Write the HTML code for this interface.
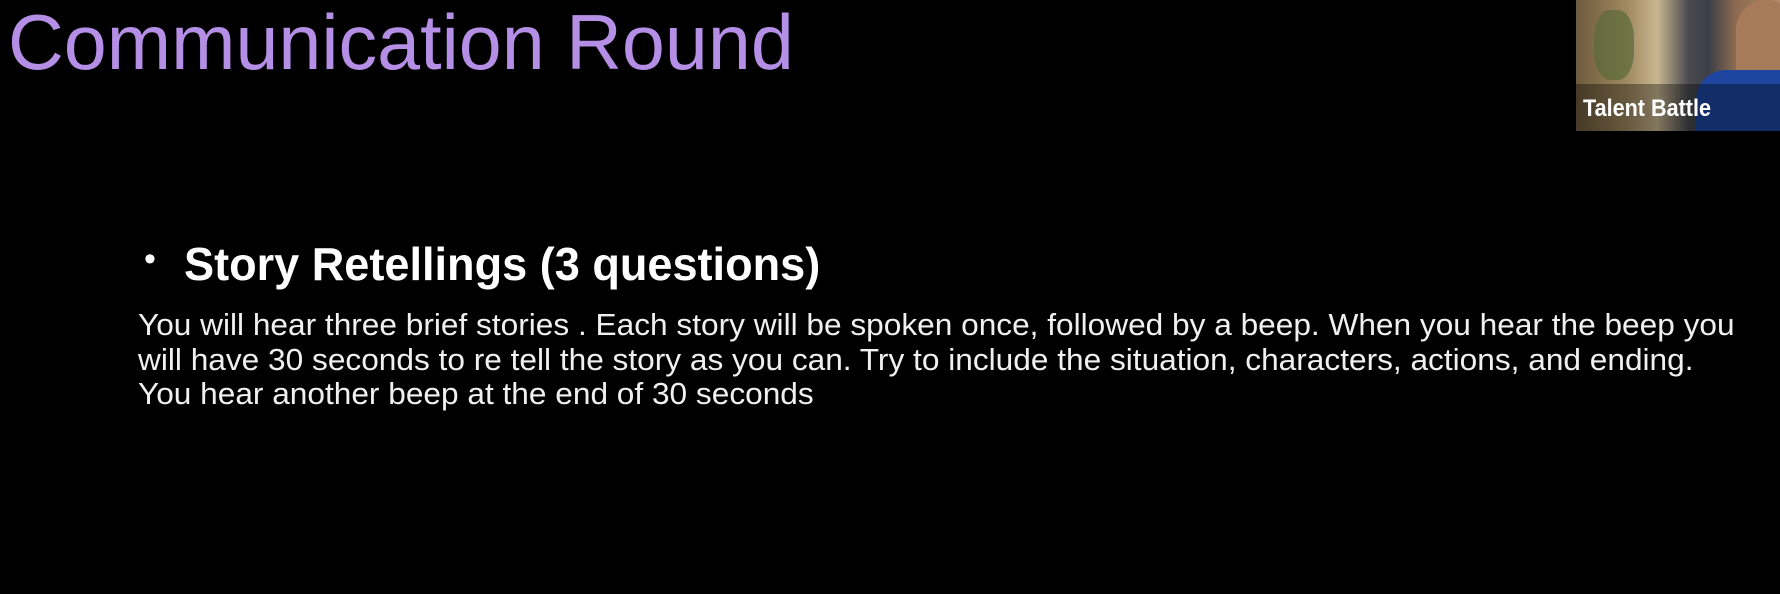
<!DOCTYPE html>
<html><head><meta charset="utf-8"><style>
html,body{margin:0;padding:0;background:#000;width:1780px;height:594px;overflow:hidden;position:relative;font-family:"Liberation Sans",sans-serif}
.t{position:absolute;white-space:nowrap;transform-origin:0 0}
#title{left:8px;top:-3px;font-size:75px;color:#b58ee6;transform:scaleX(1.03) scaleY(1.04)}
#bul{left:144px;top:240px;font-size:34px;color:#fff}
#head{left:184px;top:237px;font-size:46px;font-weight:bold;color:#fff;transform:scaleX(.98)}
.b{left:138px;font-size:31px;color:#f0f0f0;transform:scaleX(1.02)}
#cam{position:absolute;left:1576px;top:0;width:204px;height:131px;overflow:hidden;
background:linear-gradient(90deg,#6e5a3c 0%,#a08a60 25%,#c9b690 40%,#4a4a50 55%,#3d3f48 65%,#8a6a50 78%,#b38a6a 100%)}
#cam .plant{position:absolute;left:18px;top:10px;width:40px;height:70px;background:#5a6a3a;border-radius:40%;opacity:.7}
#cam .shirt{position:absolute;left:120px;top:70px;width:90px;height:70px;background:#1e46a0;border-radius:30px 0 0 0}
#cam .face{position:absolute;left:160px;top:0;width:60px;height:100px;background:#a77a5a;border-radius:30px}
#cam .band{position:absolute;left:0;top:84px;width:204px;height:47px;background:rgba(0,0,0,.35)}
#cam .lab{position:absolute;left:7px;top:95px;font-size:24px;font-weight:bold;color:#fff;white-space:nowrap;transform:scaleX(.9);transform-origin:0 0}
</style></head><body>
<div class="t" id="title">Communication Round</div>
<div class="t" id="bul">•</div>
<div class="t" id="head">Story Retellings (3 questions)</div>
<div class="t b" style="top:307px">You will hear three brief stories . Each story will be spoken once, followed by a beep. When you hear the beep you</div>
<div class="t b" style="top:342px">will have 30 seconds to re tell the story as you can. Try to include the situation, characters, actions, and ending.</div>
<div class="t b" style="top:376px">You hear another beep at the end of 30 seconds</div>
<div id="cam"><div class="plant"></div><div class="face"></div><div class="shirt"></div><div class="band"></div><div class="lab">Talent Battle</div></div>
</body></html>
